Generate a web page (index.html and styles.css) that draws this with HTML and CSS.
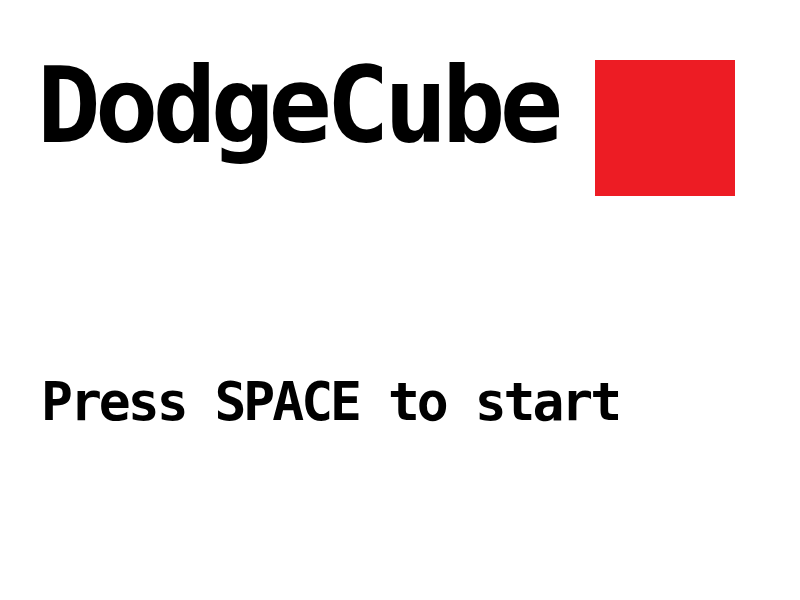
FILE: index.html
```html
<!DOCTYPE html>
<html>
<head>
<meta charset="utf-8">
<link rel="stylesheet" href="styles.css">
</head>
<body>
<div class="screen">
  <div class="header">
    <h1 class="title">DodgeCube</h1>
    <div class="cube"></div>
  </div>
  <p class="prompt">Press SPACE to start</p>
</div>
</body>
</html>
```
FILE: styles.css
```css
html, body {
  margin: 0;
  padding: 0;
  background: #ffffff;
}
.screen {
  width: 800px;
  height: 600px;
  padding: 53px 0 0 37px;
  box-sizing: border-box;
  font-family: "DejaVu Sans Mono", monospace;
  color: #000000;
}
.header {
  display: flex;
  align-items: flex-start;
}
.title {
  margin: 0;
  font-size: 106px;
  font-weight: bold;
  line-height: 1;
  letter-spacing: -6px;
}
.cube {
  width: 140px;
  height: 136px;
  background: #ed1c24;
  margin-top: 7px;
  margin-left: 38px;
}
.prompt {
  margin: 179px 0 0 4px;
  font-size: 53px;
  font-weight: bold;
  line-height: 1;
  letter-spacing: -3px;
}
```
